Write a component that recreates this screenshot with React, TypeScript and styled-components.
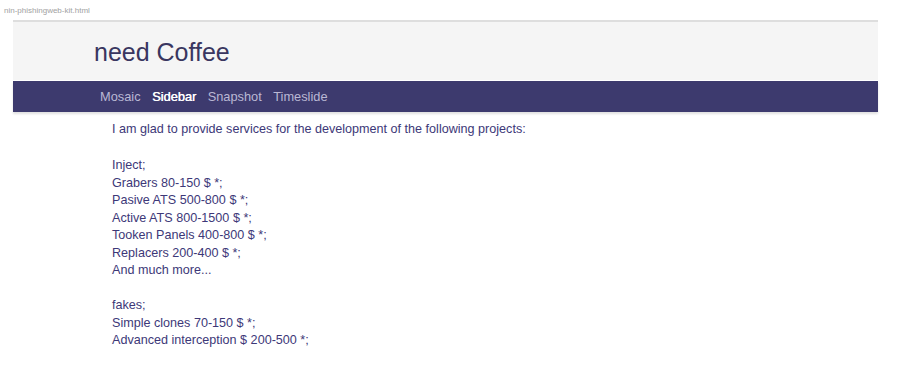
import React from "react";
import styled, { createGlobalStyle } from "styled-components";

const GlobalStyle = createGlobalStyle`
  html, body {
    margin: 0;
    padding: 0;
    background: #ffffff;
  }
  body {
    font-family: "Liberation Sans", Arial, sans-serif;
  }
`;

const Page = styled.div`
  width: 900px;
  height: 368px;
  overflow: hidden;
  background: #ffffff;
`;

const FileName = styled.div`
  height: 20px;
  padding: 6px 0 0 4px;
  box-sizing: border-box;
  font-size: 8px;
  line-height: 10px;
  color: #a2a2a2;
`;

const Frame = styled.div`
  margin: 0 22px 0 13px;
  border-top: 2px solid #dedede;
`;

const Header = styled.header`
  height: 58px;
  background: #f5f5f5;
  padding-left: 81px;
  display: flex;
  align-items: center;
`;

const Title = styled.h1`
  margin: 0;
  padding-top: 2px;
  font-size: 25px;
  font-weight: normal;
  color: #393660;
`;

const Nav = styled.nav`
  height: 31px;
  margin-top: 1px;
  background: #3d3a6e;
  padding-left: 87px;
  display: flex;
  align-items: center;
  gap: 11.5px;
  box-shadow: 0 2px 2px rgba(0, 0, 0, 0.12);
`;

const NavItem = styled.a<{ $active?: boolean }>`
  font-size: 12.8px;
  color: ${(p) => (p.$active ? "#ffffff" : "#bab8d4")};
  text-shadow: ${(p) => (p.$active ? "0.4px 0 0 #ffffff" : "none")};
  text-decoration: none;
`;

const Content = styled.main`
  padding: 9px 0 0 99px;
  font-size: 12.6px;
  line-height: 17.5px;
  color: #3d3878;
`;

const Block = styled.p<{ $gap?: number }>`
  margin: 0 0 ${(p) => p.$gap ?? 17.5}px;
`;

const services = [
  "Grabers 80-150 $ *;",
  "Pasive ATS 500-800 $ *;",
  "Active ATS 800-1500 $ *;",
  "Tooken Panels 400-800 $ *;",
  "Replacers 200-400 $ *;",
  "And much more...",
];

const fakes = ["Simple clones 70-150 $ *;", "Advanced interception $ 200-500 *;"];

export default function App() {
  return (
    <Page>
      <GlobalStyle />
      <FileName>nin-phishingweb-kit.html</FileName>
      <Frame>
        <Header>
          <Title>need Coffee</Title>
        </Header>
        <Nav>
          <NavItem>Mosaic</NavItem>
          <NavItem $active>Sidebar</NavItem>
          <NavItem>Snapshot</NavItem>
          <NavItem>Timeslide</NavItem>
        </Nav>
        <Content>
          <Block $gap={18.5}>
            I am glad to provide services for the development of the following projects:
          </Block>
          <Block>
            Inject;
            {services.map((s) => (
              <React.Fragment key={s}>
                <br />
                {s}
              </React.Fragment>
            ))}
          </Block>
          <Block>
            fakes;
            {fakes.map((s) => (
              <React.Fragment key={s}>
                <br />
                {s}
              </React.Fragment>
            ))}
          </Block>
        </Content>
      </Frame>
    </Page>
  );
}
